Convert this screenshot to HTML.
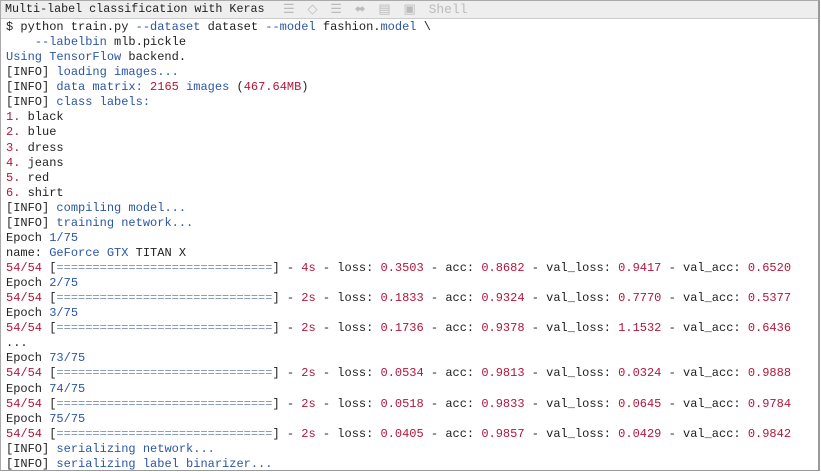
<!DOCTYPE html>
<html><head><meta charset="utf-8"><style>
body{margin:0;width:821px;height:471px;overflow:hidden;background:#fff;font-family:"Liberation Mono",monospace;}
.box{position:absolute;left:0;top:0;width:817px;height:469px;border:1px solid #aaa;border-right:2px solid #999;border-bottom:1px solid #999;}
.hd{height:17px;background:#eeeeee;border-bottom:1px solid #ccc;font-size:11.7px;line-height:17px;padding-left:4px;color:#222;white-space:pre;position:relative}
.ic{position:absolute;top:0;color:#bbb;font-size:13px;word-spacing:5px}
pre{margin:0;padding:1px 0 0 5px;font-family:"Liberation Mono",monospace;font-size:12px;line-height:15.07px;color:#222;}
.b{color:#2b56a6}.r{color:#b3163c}.g{color:#7d8fb8}
</style></head><body><div class="box">
<div class="hd">Multi-label classification with Keras<span class="ic" style="left:282px">☰ ◇ ☰ ⬌ ▤ ▣ Shell</span></div>
<pre>$ python train.py <span class="b">--dataset</span> dataset <span class="b">--model</span> fashion.<span class="b">model</span> \
    <span class="b">--labelbin</span> mlb.pickle
<span class="b">Using TensorFlow</span> backend.
[INFO] <span class="b">loading images...</span>
[INFO] <span class="b">data matrix:</span> <span class="r">2165</span> <span class="b">images</span> (<span class="r">467.64MB</span>)
[INFO] <span class="b">class labels:</span>
<span class="r">1.</span> black
<span class="r">2.</span> blue
<span class="r">3.</span> dress
<span class="r">4.</span> jeans
<span class="r">5.</span> red
<span class="r">6.</span> shirt
[INFO] <span class="b">compiling model...</span>
[INFO] <span class="b">training network...</span>
Epoch <span class="b">1/75</span>
name: <span class="b">GeForce GTX</span> TITAN X
<span class="r">54/54</span> [<span class="g">==============================</span>] - <span class="r">4s</span> - loss: <span class="r">0.3503</span> - acc: <span class="r">0.8682</span> - val_loss: <span class="r">0.9417</span> - val_acc: <span class="r">0.6520</span>
Epoch <span class="b">2/75</span>
<span class="r">54/54</span> [<span class="g">==============================</span>] - <span class="r">2s</span> - loss: <span class="r">0.1833</span> - acc: <span class="r">0.9324</span> - val_loss: <span class="r">0.7770</span> - val_acc: <span class="r">0.5377</span>
Epoch <span class="b">3/75</span>
<span class="r">54/54</span> [<span class="g">==============================</span>] - <span class="r">2s</span> - loss: <span class="r">0.1736</span> - acc: <span class="r">0.9378</span> - val_loss: <span class="r">1.1532</span> - val_acc: <span class="r">0.6436</span>
...
Epoch <span class="b">73/75</span>
<span class="r">54/54</span> [<span class="g">==============================</span>] - <span class="r">2s</span> - loss: <span class="r">0.0534</span> - acc: <span class="r">0.9813</span> - val_loss: <span class="r">0.0324</span> - val_acc: <span class="r">0.9888</span>
Epoch <span class="b">74/75</span>
<span class="r">54/54</span> [<span class="g">==============================</span>] - <span class="r">2s</span> - loss: <span class="r">0.0518</span> - acc: <span class="r">0.9833</span> - val_loss: <span class="r">0.0645</span> - val_acc: <span class="r">0.9784</span>
Epoch <span class="b">75/75</span>
<span class="r">54/54</span> [<span class="g">==============================</span>] - <span class="r">2s</span> - loss: <span class="r">0.0405</span> - acc: <span class="r">0.9857</span> - val_loss: <span class="r">0.0429</span> - val_acc: <span class="r">0.9842</span>
[INFO] <span class="b">serializing network...</span>
[INFO] <span class="b">serializing label binarizer...</span></pre>
</div></body></html>
